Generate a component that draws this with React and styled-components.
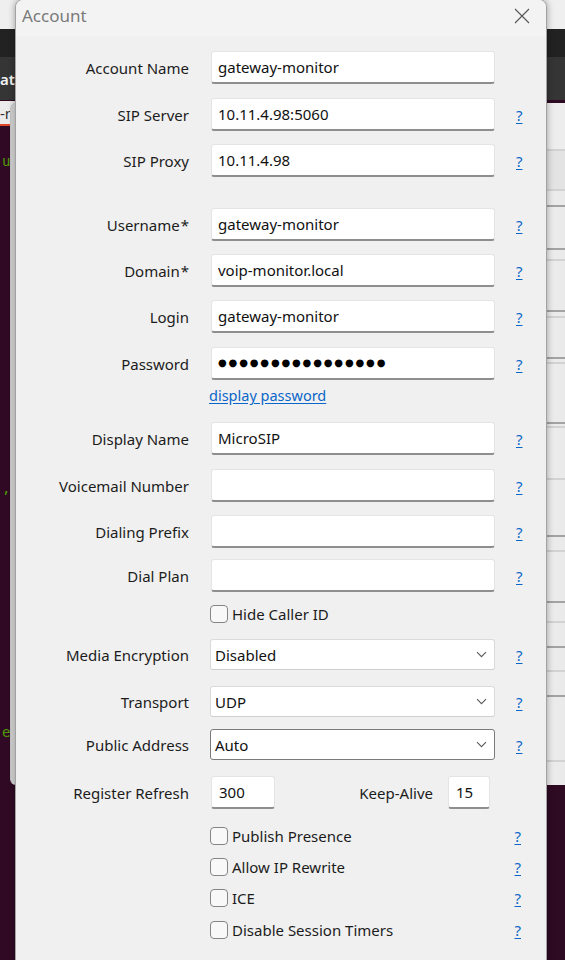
import React from 'react';
import styled, { createGlobalStyle } from 'styled-components';

const Global = createGlobalStyle`
  html, body { margin: 0; padding: 0; }
  body {
    width: 565px; height: 960px; overflow: hidden;
    background: #300a24;
    font-family: "Noto Sans", "Open Sans", sans-serif;
  }
`;

/* ---------- desktop background ---------- */
const Desktop = styled.div`
  position: relative;
  width: 565px;
  height: 960px;
  overflow: hidden;
  background: #2e0a23;
`;

const TopStrip = styled.div`
  position: absolute; left: 0; top: 0; width: 565px; height: 29px;
  background: #efefef;
`;

const AppHeader = styled.div`
  position: absolute; left: 0; top: 29px; width: 565px; height: 28px;
  background: #222222;
`;

const AppToolbar = styled.div`
  position: absolute; left: 0; top: 57px; width: 565px; height: 43px;
  background: #353535;
  color: #f2f2f2;
  font: 600 15px "Noto Sans", sans-serif;
  display: flex; align-items: center;
  box-sizing: border-box;
`;

const Terminal = styled.div`
  position: absolute; left: -200px; top: 101px; width: 230px; height: 860px;
  background: #300a24;
  display: flex; flex-direction: column;
`;

const TermHeader = styled.div`
  height: 23px;
  background: #ebebeb;
  border-bottom: 2px solid #e0452a;
  color: #333;
  font: 15px "Noto Sans", sans-serif;
  display: flex; align-items: center;
  padding-left: 200px;
`;

const TermBody = styled.div`
  padding-left: 202px;
  color: #4e9a06;
  font: 14px "DejaVu Sans Mono", monospace;
  display: flex; flex-direction: column;
`;

const TermLine = styled.div`
  margin-top: ${p => p.mt}px;
  line-height: 14px;
`;

const SideWindow = styled.div`
  position: absolute; left: 10px; top: 103px; width: 600px; height: 682px;
  background: linear-gradient(90deg, #cfcfcf 0px, #dedede 4px, #ececec 540px, #e2e2e2 600px);
  border-radius: 6px 0 0 6px;
  border-left: 1px solid #c4c4c4;
  display: flex; flex-direction: column;
`;

const SideRow = styled.div`
  height: ${p => p.h}px;
  flex: none;
  margin-left: 6px;
  border-bottom: 2px solid ${p => (p.dark ? '#a3a3a3' : '#d2d2d2')};
  background: ${p => p.bg || 'transparent'};
`;

/* ---------- dialog ---------- */
const Dialog = styled.div`
  position: absolute; left: 15px; top: -1px;
  width: 530px; height: 975px;
  background: #f0f0f0;
  border: 1px solid #a2a2a2;
  border-radius: 8px 8px 0 0;
  box-shadow: 0 0 7px rgba(0, 0, 0, 0.35);
  overflow: hidden;
  display: flex; flex-direction: column;
`;

const TitleBar = styled.div`
  height: 36px;
  flex: none;
  background: #f3f3f3;
  display: flex; align-items: center; justify-content: space-between;
  padding: 0 16px 0 6px;
  box-sizing: border-box;
`;

const Title = styled.div`
  font-size: 17px;
  color: #7a7a7a;
  margin-top: -6px;
`;

const CloseButton = styled.div`
  width: 16px; height: 16px;
  margin-top: -5px;
  display: flex; align-items: center; justify-content: center;
`;

const Form = styled.div`
  display: flex; flex-direction: column;
`;

const Row = styled.div`
  display: flex; align-items: center;
  height: ${p => p.h || 33}px;
  margin-top: ${p => p.mt}px;
  flex: none;
`;

const Label = styled.div`
  width: 173px;
  margin-right: 22px;
  text-align: right;
  font-size: 15px;
  color: #1c1c1c;
  white-space: nowrap;
  flex: none;
`;

const Star = styled.span`
  margin-left: 1px;
`;

const TextBox = styled.input`
  width: ${p => p.w || 284}px;
  height: 33px;
  box-sizing: border-box;
  flex: none;
  margin: 0;
  padding: 0 ${p => p.pad || 6}px;
  background: #ffffff;
  border: 1px solid #e4e4e4;
  border-bottom: 2px solid #8e8e8e;
  border-radius: 3px;
  font-family: "Noto Sans", sans-serif;
  font-size: 15px;
  color: #111;
  outline: none;
`;

const PasswordBox = styled.div`
  width: 284px;
  height: 33px;
  box-sizing: border-box;
  flex: none;
  padding: 0 6px;
  background: #ffffff;
  border: 1px solid #e4e4e4;
  border-bottom: 2px solid #8e8e8e;
  border-radius: 3px;
  display: flex; align-items: center;
`;

const Dots = styled.span`
  font-family: "DejaVu Sans", sans-serif;
  font-size: 10px;
  letter-spacing: 1.85px;
  color: #000;
  line-height: 1;
`;

const Select = styled.div`
  width: 285px;
  height: 31px;
  box-sizing: border-box;
  flex: none;
  margin-left: -1px;
  padding: 0 7px 0 4px;
  background: #ffffff;
  border: 1px solid ${p => (p.focus ? '#7a7a7a' : '#dadada')};
  border-bottom-color: ${p => (p.focus ? '#7a7a7a' : '#cfcfcf')};
  border-radius: 3px;
  display: flex; align-items: center; justify-content: space-between;
  font-size: 15px;
  color: #111;
`;

const Help = styled.a`
  margin-left: 21px;
  font-size: 15px;
  color: #0a66c8;
  text-decoration: underline;
  text-underline-offset: 2px;
  cursor: pointer;
`;

const LinkRow = styled.div`
  height: 20px;
  margin-top: ${p => p.mt}px;
  padding-left: 193px;
  display: flex; align-items: center;
`;

const Link = styled.a`
  font-size: 14.5px;
  color: #0a66c8;
  text-decoration: underline;
  text-underline-offset: 2px;
  cursor: pointer;
`;

const CheckRow = styled.div`
  display: flex; align-items: center;
  height: 18px;
  margin-top: ${p => p.mt}px;
  padding-left: 194px;
  flex: none;
`;

const Box = styled.span`
  width: 18px; height: 18px;
  box-sizing: border-box;
  border: 1px solid #858585;
  border-radius: 4px;
  background: #f8f8f8;
  flex: none;
`;

const CheckText = styled.span`
  margin-left: 4px;
  font-size: 15px;
  color: #1c1c1c;
  white-space: nowrap;
`;

const CheckHelp = styled(Help)`
  margin-left: auto;
  margin-right: 25px;
`;

const Compound = styled.div`
  width: 279px;
  display: flex; align-items: center;
  flex: none;
`;

const InlineLabel = styled.span`
  margin-left: auto;
  margin-right: 15px;
  font-size: 15px;
  color: #1c1c1c;
`;

const Chevron = () => (
  <svg width="11" height="7" viewBox="0 0 11 7">
    <path d="M1 1.2l4.5 4.5 4.5-4.5" fill="none" stroke="#5a5a5a" strokeWidth="1.1" />
  </svg>
);

const CloseIcon = () => (
  <svg width="16" height="16" viewBox="0 0 16 16">
    <path d="M1 1l14 14M15 1L1 15" stroke="#555" strokeWidth="1.1" fill="none" />
  </svg>
);

const TextRow = ({ mt, label, star, value, help = true }) => (
  <Row mt={mt}>
    <Label>{label}{star && <Star>*</Star>}</Label>
    <TextBox readOnly defaultValue={value} />
    {help && <Help>?</Help>}
  </Row>
);

const SelectRow = ({ mt, label, value, focus }) => (
  <Row mt={mt} h={31}>
    <Label>{label}</Label>
    <Select focus={focus}>
      <span>{value}</span>
      <Chevron />
    </Select>
    <Help>?</Help>
  </Row>
);

const Check = ({ mt, label, help }) => (
  <CheckRow mt={mt}>
    <Box />
    <CheckText>{label}</CheckText>
    {help && <CheckHelp>?</CheckHelp>}
  </CheckRow>
);

const sideRows = [
  { h: 46, bg: '#ededed' }, { h: 38, bg: '#e3e3e3' }, { h: 14, dark: true },
  { h: 41, dark: true }, { h: 9 }, { h: 49, dark: true }, { h: 4 }, { h: 39, dark: true },
  { h: 3 }, { h: 58, dark: true }, { h: 2 }, { h: 50 }, { h: 55, dark: true }, { h: 13 },
  { h: 49, dark: true }, { h: 18 }, { h: 23, dark: true }, { h: 22 }, { h: 23, dark: true },
  { h: 63 },
];

export default function App() {
  return (
    <Desktop>
      <Global />
      <TopStrip />
      <AppHeader />
      <AppToolbar>ato</AppToolbar>
      <Terminal>
        <TermHeader>-n</TermHeader>
        <TermBody>
          <TermLine mt={28}>u</TermLine>
          <TermLine mt={313}>,</TermLine>
          <TermLine mt={230}>e</TermLine>
        </TermBody>
      </Terminal>
      <SideWindow>
        {sideRows.map((r, i) => (
          <SideRow key={i} h={r.h} dark={r.dark} bg={r.bg} />
        ))}
      </SideWindow>

      <Dialog>
        <TitleBar>
          <Title>Account</Title>
          <CloseButton><CloseIcon /></CloseButton>
        </TitleBar>
        <Form>
          <TextRow mt={15} label="Account Name" value="gateway-monitor" help={false} />
          <TextRow mt={14} label="SIP Server" value="10.11.4.98:5060" />
          <TextRow mt={13} label="SIP Proxy" value="10.11.4.98" />
          <TextRow mt={31} label="Username" star value="gateway-monitor" />
          <TextRow mt={13} label="Domain" star value="voip-monitor.local" />
          <TextRow mt={13} label="Login" value="gateway-monitor" />
          <Row mt={14}>
            <Label>Password</Label>
            <PasswordBox><Dots>{'●'.repeat(16)}</Dots></PasswordBox>
            <Help>?</Help>
          </Row>
          <LinkRow mt={5}><Link>display password</Link></LinkRow>
          <TextRow mt={17} label="Display Name" value="MicroSIP" />
          <TextRow mt={14} label="Voicemail Number" value="" />
          <TextRow mt={13} label="Dialing Prefix" value="" />
          <TextRow mt={11} label="Dial Plan" value="" />
          <Check mt={13} label="Hide Caller ID" />
          <SelectRow mt={16} label="Media Encryption" value="Disabled" />
          <SelectRow mt={16} label="Transport" value="UDP" />
          <SelectRow mt={12} label="Public Address" value="Auto" focus />
          <Row mt={16}>
            <Label>Register Refresh</Label>
            <Compound>
              <TextBox readOnly w={64} pad={7} defaultValue="300" />
              <InlineLabel>Keep-Alive</InlineLabel>
              <TextBox readOnly w={42} pad={7} defaultValue="15" />
            </Compound>
          </Row>
          <Check mt={18} label="Publish Presence" help />
          <Check mt={13} label="Allow IP Rewrite" help />
          <Check mt={13} label="ICE" help />
          <Check mt={14} label="Disable Session Timers" help />
        </Form>
      </Dialog>
    </Desktop>
  );
}
